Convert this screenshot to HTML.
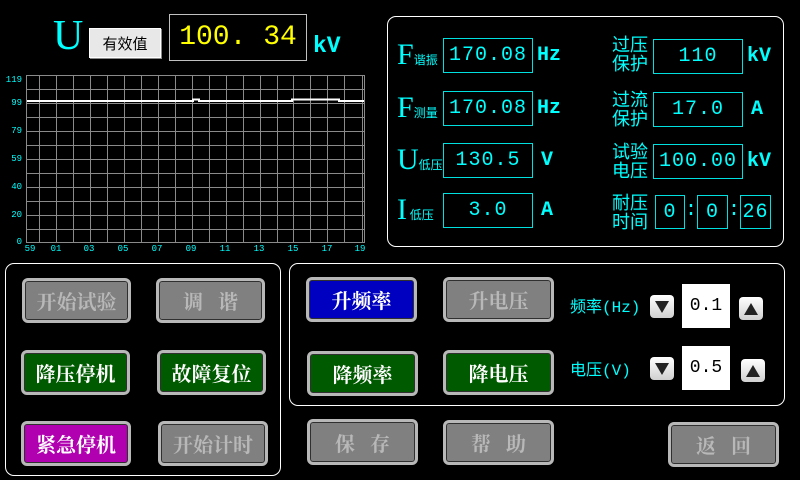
<!DOCTYPE html>
<html><head><meta charset="utf-8"><style>
*{margin:0;padding:0;box-sizing:border-box}
body{width:800px;height:480px;background:#000;position:relative;overflow:hidden;font-family:"Liberation Sans","Noto Sans CJK SC",sans-serif}
.a{position:absolute}
.cy{color:#00ffff}
.panel{position:absolute;border:1px solid #fff;border-radius:9px}
.vb{position:absolute;border:1.5px solid #00e0e0;color:#00ffff;font-family:"Liberation Mono",monospace;font-size:20px;letter-spacing:1px;display:flex;align-items:center;justify-content:center}
.btn{position:absolute;border:3px solid #b8b8b8;border-radius:6px;box-shadow:inset 0 0 0 1px #303030;display:flex;align-items:center;justify-content:center;font-family:"Noto Serif CJK SC","WenQuanYi Zen Hei",serif;font-weight:bold;font-size:20px;color:#fff}
.g{background:#808080;color:#b8b8b8}
.gr{background:#005a00}
.bl{background:#0000c0}
.pu{background:#b000b0}
.lab{position:absolute;color:#00ffff;font-family:"Noto Sans CJK SC",sans-serif;font-size:18px;line-height:19px}
.sub{font-size:12px;font-family:"Noto Sans CJK SC",sans-serif}
.big{font-family:"Liberation Serif",serif;font-size:30px}
.unit{position:absolute;color:#00ffff;font-family:"Liberation Mono",monospace;font-weight:bold;font-size:20px}
.arr{position:absolute;width:24px;height:23px;border-radius:4px;background:linear-gradient(#fff,#d0d0d0);display:flex;align-items:center;justify-content:center}
.yl{position:absolute;left:0;width:22px;text-align:right;color:#00ffff;font-size:9px;font-family:"Liberation Mono",monospace}
.xl{position:absolute;top:244px;color:#00ffff;font-size:9px;font-family:"Liberation Mono",monospace;width:20px;text-align:center}
</style></head><body>

<div class="a cy" style="left:53px;top:14px;font-family:'Liberation Serif',serif;font-size:42px;line-height:44px">U</div>
<div class="a" style="left:89px;top:28px;width:72px;height:30px;background:#e8e8e8;border:1px solid #fff;box-shadow:1px 1px 0 #888;font-family:'Noto Sans CJK SC',sans-serif;font-size:15px;display:flex;align-items:center;justify-content:center;color:#000">有效值</div>
<div class="a" style="left:169px;top:14px;width:138px;height:47px;border:1px solid #c0c0c0;color:#ffff00;font-family:'Liberation Mono',monospace;font-size:28px;display:flex;align-items:center;justify-content:center">100. 34</div>
<div class="unit" style="left:313px;top:33px;font-size:23px">kV</div>

<svg class="a" style="left:0;top:70px" width="380" height="185">
<g stroke="#8a8a8a" stroke-width="1">
<line x1="26.5" y1="5" x2="26.5" y2="172"/><line x1="39.5" y1="5" x2="39.5" y2="172"/>
<line x1="56.5" y1="5" x2="56.5" y2="172"/><line x1="73.5" y1="5" x2="73.5" y2="172"/>
<line x1="90.5" y1="5" x2="90.5" y2="172"/><line x1="107.5" y1="5" x2="107.5" y2="172"/>
<line x1="124.5" y1="5" x2="124.5" y2="172"/><line x1="141.5" y1="5" x2="141.5" y2="172"/>
<line x1="158.5" y1="5" x2="158.5" y2="172"/><line x1="175.5" y1="5" x2="175.5" y2="172"/>
<line x1="192.5" y1="5" x2="192.5" y2="172"/><line x1="209.5" y1="5" x2="209.5" y2="172"/>
<line x1="226.5" y1="5" x2="226.5" y2="172"/><line x1="243.5" y1="5" x2="243.5" y2="172"/>
<line x1="260.5" y1="5" x2="260.5" y2="172"/><line x1="277.5" y1="5" x2="277.5" y2="172"/>
<line x1="293.5" y1="5" x2="293.5" y2="172"/><line x1="310.5" y1="5" x2="310.5" y2="172"/>
<line x1="327.5" y1="5" x2="327.5" y2="172"/><line x1="344.5" y1="5" x2="344.5" y2="172"/>
<line x1="362.5" y1="5" x2="362.5" y2="172"/><line x1="364.5" y1="5" x2="364.5" y2="172"/>
<line x1="26" y1="5.5" x2="365" y2="5.5"/><line x1="26" y1="19.5" x2="365" y2="19.5"/>
<line x1="26" y1="33.5" x2="365" y2="33.5"/><line x1="26" y1="47.5" x2="365" y2="47.5"/>
<line x1="26" y1="61.5" x2="365" y2="61.5"/><line x1="26" y1="75.5" x2="365" y2="75.5"/>
<line x1="26" y1="89.5" x2="365" y2="89.5"/><line x1="26" y1="103.5" x2="365" y2="103.5"/>
<line x1="26" y1="117.5" x2="365" y2="117.5"/><line x1="26" y1="131.5" x2="365" y2="131.5"/>
<line x1="26" y1="145.5" x2="365" y2="145.5"/><line x1="26" y1="159.5" x2="365" y2="159.5"/>
<line x1="26" y1="172.5" x2="365" y2="172.5"/>
</g>
<polyline fill="none" stroke="#fff" stroke-width="2" points="27,31 193,31 193,29.5 199,29.5 199,31 292,31 292,29.5 339,29.5 339,31 364,31"/>
</svg>
<div class="yl" style="top:75px">119</div>
<div class="yl" style="top:98px">99</div>
<div class="yl" style="top:126px">79</div>
<div class="yl" style="top:154px">59</div>
<div class="yl" style="top:182px">40</div>
<div class="yl" style="top:210px">20</div>
<div class="yl" style="top:237px">0</div>
<div class="xl" style="left:20px">59</div><div class="xl" style="left:46px">01</div>
<div class="xl" style="left:79px">03</div><div class="xl" style="left:113px">05</div>
<div class="xl" style="left:147px">07</div><div class="xl" style="left:181px">09</div>
<div class="xl" style="left:215px">11</div><div class="xl" style="left:249px">13</div>
<div class="xl" style="left:283px">15</div><div class="xl" style="left:317px">17</div>
<div class="xl" style="left:350px">19</div>

<div class="panel" style="left:387px;top:16px;width:397px;height:231px"></div>
<div class="a cy" style="left:397px;top:38px"><span class="big">F</span><span class="sub">谐振</span></div>
<div class="a cy" style="left:397px;top:91px"><span class="big">F</span><span class="sub">测量</span></div>
<div class="a cy" style="left:397px;top:143px"><span class="big">U</span><span class="sub">低压</span></div>
<div class="a cy" style="left:397px;top:193px"><span class="big">I</span><span class="sub"> 低压</span></div>
<div class="vb" style="left:443px;top:38px;width:90px;height:35px">170.08</div>
<div class="vb" style="left:443px;top:91px;width:90px;height:35px">170.08</div>
<div class="vb" style="left:443px;top:143px;width:90px;height:35px">130.5</div>
<div class="vb" style="left:443px;top:193px;width:90px;height:35px">3.0</div>
<div class="unit" style="left:537px;top:44px">Hz</div>
<div class="unit" style="left:537px;top:97px">Hz</div>
<div class="unit" style="left:541px;top:149px">V</div>
<div class="unit" style="left:541px;top:199px">A</div>

<div class="lab" style="left:612px;top:35px">过压<br>保护</div>
<div class="lab" style="left:612px;top:90px">过流<br>保护</div>
<div class="lab" style="left:612px;top:142px">试验<br>电压</div>
<div class="lab" style="left:612px;top:193px">耐压<br>时间</div>
<div class="vb" style="left:653px;top:39px;width:90px;height:35px">110</div>
<div class="vb" style="left:653px;top:92px;width:90px;height:35px">17.0</div>
<div class="vb" style="left:653px;top:144px;width:90px;height:35px">100.00</div>
<div class="unit" style="left:747px;top:45px">kV</div>
<div class="unit" style="left:751px;top:98px">A</div>
<div class="unit" style="left:747px;top:150px">kV</div>
<div class="vb" style="left:655px;top:195px;width:30px;height:34px">0</div>
<div class="vb" style="left:697px;top:195px;width:31px;height:34px">0</div>
<div class="vb" style="left:740px;top:195px;width:31px;height:34px">26</div>
<div class="unit" style="left:685px;top:199px;font-weight:normal">:</div>
<div class="unit" style="left:728px;top:199px;font-weight:normal">:</div>

<div class="panel" style="left:5px;top:263px;width:276px;height:213px"></div>
<div class="btn g" style="left:22px;top:278px;width:109px;height:45px">开始试验</div>
<div class="btn g" style="left:156px;top:278px;width:109px;height:45px">调&nbsp;&nbsp;&nbsp;谐</div>
<div class="btn gr" style="left:21px;top:350px;width:109px;height:45px">降压停机</div>
<div class="btn gr" style="left:157px;top:350px;width:109px;height:45px">故障复位</div>
<div class="btn pu" style="left:21px;top:421px;width:110px;height:45px">紧急停机</div>
<div class="btn g" style="left:158px;top:421px;width:110px;height:45px">开始计时</div>

<div class="panel" style="left:289px;top:263px;width:496px;height:143px"></div>
<div class="btn bl" style="left:306px;top:277px;width:111px;height:45px">升频率</div>
<div class="btn gr" style="left:307px;top:351px;width:111px;height:45px">降频率</div>
<div class="btn g" style="left:443px;top:277px;width:111px;height:45px">升电压</div>
<div class="btn gr" style="left:443px;top:350px;width:111px;height:45px">降电压</div>
<div class="lab" style="left:570px;top:299px;font-size:16px;font-family:'Liberation Mono','Noto Sans CJK SC',monospace">频率(Hz)</div>
<div class="lab" style="left:570px;top:362px;font-size:16px;font-family:'Liberation Mono','Noto Sans CJK SC',monospace">电压(V)</div>
<div class="arr" style="left:650px;top:295px"><svg width="14" height="12"><polygon points="0,0 14,0 7,12" fill="#222"/></svg></div>
<div class="arr" style="left:650px;top:357px"><svg width="14" height="12"><polygon points="0,0 14,0 7,12" fill="#222"/></svg></div>
<div class="arr" style="left:739px;top:297px"><svg width="14" height="12"><polygon points="0,12 14,12 7,0" fill="#222"/></svg></div>
<div class="arr" style="left:741px;top:359px"><svg width="14" height="12"><polygon points="0,12 14,12 7,0" fill="#222"/></svg></div>
<div class="a" style="left:682px;top:284px;width:48px;height:44px;background:#fff;color:#000;font-family:'Liberation Mono',monospace;font-size:18px;display:flex;align-items:center;justify-content:center">0.1</div>
<div class="a" style="left:682px;top:346px;width:48px;height:44px;background:#fff;color:#000;font-family:'Liberation Mono',monospace;font-size:18px;display:flex;align-items:center;justify-content:center">0.5</div>

<div class="btn g" style="left:307px;top:419px;width:111px;height:46px">保&nbsp;&nbsp;&nbsp;存</div>
<div class="btn g" style="left:443px;top:420px;width:111px;height:45px">帮&nbsp;&nbsp;&nbsp;助</div>
<div class="btn g" style="left:668px;top:422px;width:111px;height:45px">返&nbsp;&nbsp;&nbsp;回</div>
</body></html>
